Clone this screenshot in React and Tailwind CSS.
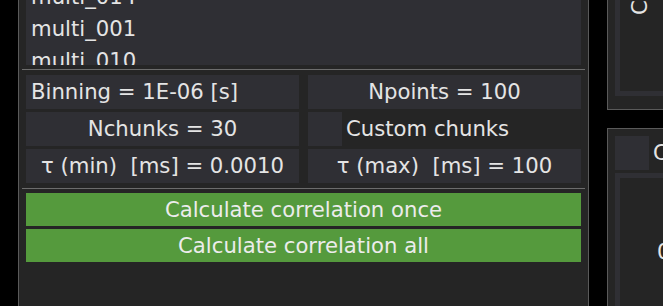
const files = ['multi_014', 'multi_001', 'multi_010'];

const Cell = ({ children, left }) => (
  <div
    className={`h-[34px] bg-[#2f2f34] flex items-center whitespace-nowrap ${
      left ? 'justify-start pl-[5px]' : 'justify-center'
    }`}
  >
    {children}
  </div>
);

const GreenButton = ({ label }) => (
  <button className="h-[33px] w-full bg-[#559a3d] flex items-center justify-center text-[#ececec]">
    {label}
  </button>
);

export default function App() {
  return (
    <div className="w-[663px] h-[306px] bg-black flex overflow-hidden font-['DejaVu_Sans',Verdana,sans-serif] text-[21.2px] text-[#e4e4e4]">
      {/* Left panel: file list and correlation settings */}
      <div className="ml-[18px] w-[571px] h-full shrink-0 border-x border-[#5a5a5a] bg-[#252525] px-[3px]">
        <div className="px-[4px]">
          <div className="h-[65px] bg-[#2f2f34] overflow-hidden pl-[5px]">
            <div className="-mt-[19px] leading-[32px]">
              {files.map((f) => (
                <div key={f}>{f}</div>
              ))}
            </div>
          </div>
        </div>

        <div className="mt-[4px] h-px bg-[#6c6c6c]" />

        <div className="mt-[5px] px-[4px] grid grid-cols-2 gap-x-[9px] gap-y-[3px]">
          <Cell left>Binning = 1E-06 [s]</Cell>
          <Cell>Npoints = 100</Cell>
          <Cell>Nchunks = 30</Cell>
          <div className="h-[34px] flex items-center gap-[4px] whitespace-nowrap">
            <div className="w-[34px] h-[34px] bg-[#2f2f34]" />
            <span>Custom chunks</span>
          </div>
          <Cell>τ (min)&nbsp; [ms] = 0.0010</Cell>
          <Cell>τ (max)&nbsp; [ms] = 100</Cell>
        </div>

        <div className="mt-[5px] h-px bg-[#6c6c6c]" />

        <div className="mt-[4px] px-[4px] flex flex-col gap-[3px]">
          <GreenButton label="Calculate correlation once" />
          <GreenButton label="Calculate correlation all" />
        </div>
      </div>

      {/* Right panels, cut off by the window */}
      <div className="ml-[18px] w-[80px] shrink-0 h-full flex flex-col">
        <div className="h-[110px] shrink-0 border-l border-b border-[#5a5a5a] bg-[#252525] pl-[7px]">
          <div className="h-[96px] border-l-[5px] border-b-[5px] border-[#2f2f34] overflow-hidden">
            <div className="-mt-[120px] ml-[8px] h-[135px] [writing-mode:vertical-rl] rotate-180 whitespace-nowrap leading-[24px]">
              Correlation
            </div>
          </div>
        </div>

        <div className="mt-[18px] flex-1 flex flex-col border-l border-t border-[#5a5a5a] bg-[#252525] pl-[7px] pt-[7px]">
          <div className="h-[34px] flex items-center gap-[4px] whitespace-nowrap">
            <div className="w-[34px] h-[34px] shrink-0 bg-[#2f2f34]" />
            <span>Counts</span>
          </div>
          <div className="mt-[3px] flex-1 border-l-[5px] border-t-[5px] border-[#2f2f34] pl-[37px] pt-[58px] whitespace-nowrap">
            0.0
          </div>
        </div>
      </div>
    </div>
  );
}
